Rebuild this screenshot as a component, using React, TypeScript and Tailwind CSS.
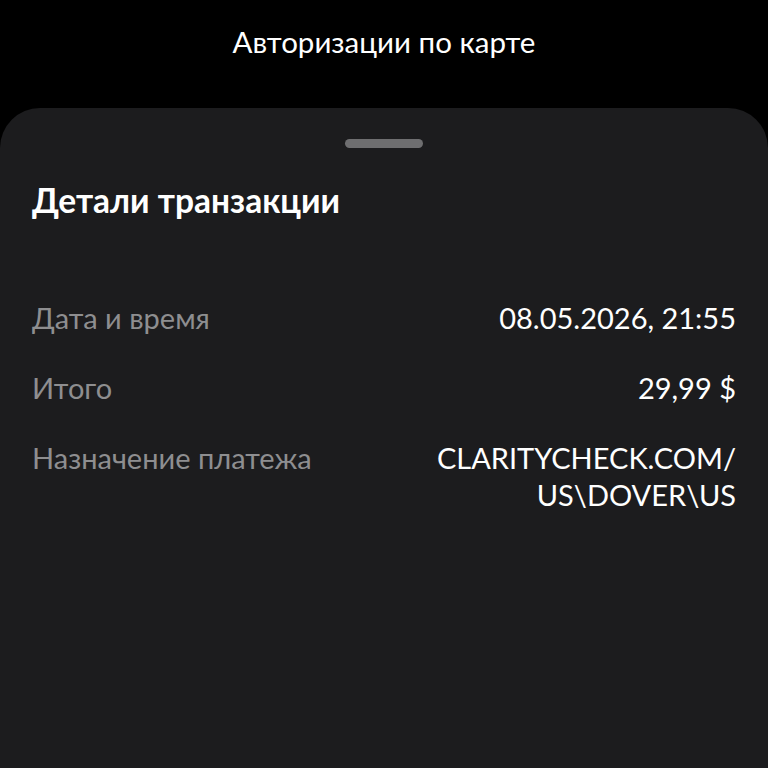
import React from "react";

const rows = [
  { label: "Дата и время", value: ["08.05.2026, 21:55"] },
  { label: "Итого", value: ["29,99 $"] },
  { label: "Назначение платежа", value: ["CLARITYCHECK.COM/", "US\\DOVER\\US"] },
];

export default function App() {
  return (
    <div
      className="w-[768px] h-[768px] bg-black flex flex-col overflow-hidden"
      style={{ fontFamily: "Lato, 'Noto Sans', sans-serif" }}
    >
      <div className="h-[108px] flex justify-center pt-[23px]">
        <div className="text-white text-[29.5px] leading-[38px]">Авторизации по карте</div>
      </div>
      <div className="flex-1 bg-[#1c1c1e] rounded-t-[40px] flex flex-col px-[32px]">
        <div className="flex justify-center pt-[31px]">
          <div className="w-[78px] h-[9px] rounded-full bg-[#6e6e70]" />
        </div>
        <div className="mt-[32px] text-white text-[33.5px] font-bold leading-[40px]">Детали транзакции</div>
        <div className="mt-[79px] flex flex-col gap-[33px]">
          {rows.map((r) => (
            <div key={r.label} className="flex justify-between items-start text-[29px] leading-[37px]">
              <div className="text-[#8e8e90]">{r.label}</div>
              <div className="text-white text-right">
                {r.value.map((v) => (
                  <div key={v}>{v}</div>
                ))}
              </div>
            </div>
          ))}
        </div>
      </div>
    </div>
  );
}
